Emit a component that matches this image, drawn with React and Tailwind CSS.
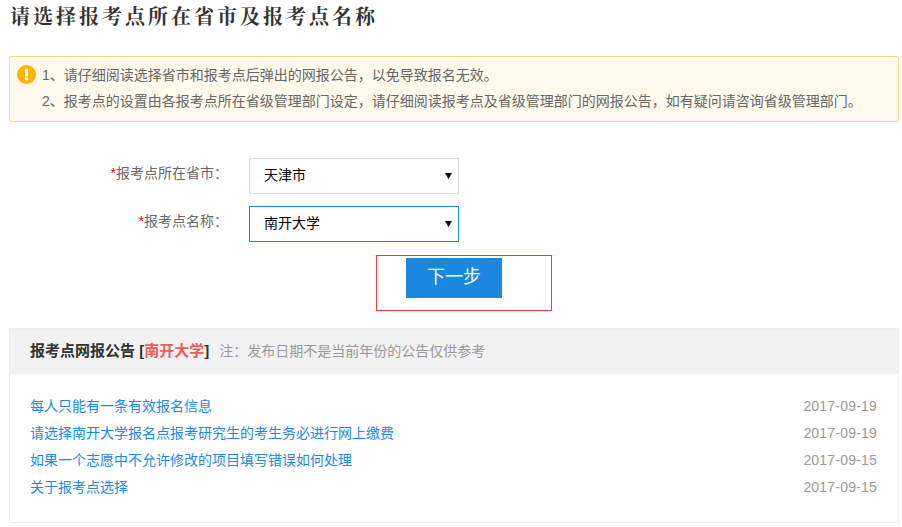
function Select({ value, borderClass }) {
  return (
    <div className="relative ml-[21px] w-[210px] h-[36px]">
      <select defaultValue={value} className={`appearance-none block w-full h-full pl-[14px] pb-[2px] border ${borderClass} bg-white text-[14px] text-black outline-none`}>
        <option>{value}</option>
      </select>
      <svg width="7" height="6" viewBox="0 0 7 6" className="absolute right-[7px] top-[15px] pointer-events-none">
        <path d="M0 0H7L3.5 6Z" fill="#111" />
      </svg>
    </div>
  );
}

export default function App() {
  const rows = [
    ["每人只能有一条有效报名信息", "2017-09-19"],
    ["请选择南开大学报名点报考研究生的考生务必进行网上缴费", "2017-09-19"],
    ["如果一个志愿中不允许修改的项目填写错误如何处理", "2017-09-15"],
    ["关于报考点选择", "2017-09-15"],
  ];
  return (
    <div className="w-[902px] h-[527px] overflow-hidden bg-white font-['Liberation_Sans','Noto_Sans_CJK_SC',sans-serif] text-[14px] text-[#666]">
      <h1 className="ml-[10px] h-[56px] pt-[2px] text-[20px] leading-[28px] font-bold tracking-[3px] text-[#333] font-['Noto_Serif_CJK_SC','Noto_Sans_CJK_SC',serif]">请选择报考点所在省市及报考点名称</h1>
      <div className="ml-[9px] w-[890px] h-[66px] border border-[#fdd87e] rounded-[2px] bg-[#fff9eb] flex pl-[7px] pt-[5px]">
        <svg width="19" height="19" viewBox="0 0 19 19" className="mt-[3px] shrink-0">
          <circle cx="9.5" cy="9.5" r="9.5" fill="#ffb400" />
          <rect x="8" y="3.5" width="3" height="8" rx="1.2" fill="#fff" />
          <circle cx="9.5" cy="14" r="1.7" fill="#fff" />
        </svg>
        <div className="ml-[6px] leading-[26px]">
          <p>1、请仔细阅读选择省市和报考点后弹出的网报公告，以免导致报名无效。</p>
          <p>2、报考点的设置由各报考点所在省级管理部门设定，请仔细阅读报考点及省级管理部门的网报公告，如有疑问请咨询省级管理部门。</p>
        </div>
      </div>
      <div className="mt-[36px] flex items-start">
        <label className="w-[228px] text-right leading-[30px]"><span className="text-[#f00]">*</span>报考点所在省市：</label>
        <Select value="天津市" borderClass="border-[#d9d9d9]" />
      </div>
      <div className="mt-[12px] flex items-start">
        <label className="w-[228px] text-right leading-[30px]"><span className="text-[#f00]">*</span>报考点名称：</label>
        <Select value="南开大学" borderClass="border-[#1c88e2]" />
      </div>
      <div className="ml-[376px] mt-[13px] w-[176px] h-[56px] border border-[#f43a3f] pl-[29px] pt-[2px]">
        <button className="block w-[96px] h-[40px] pb-[2px] bg-[#1a88e0] text-white text-[18px]">下一步</button>
      </div>
      <section className="ml-[9px] mt-[17px] w-[890px] h-[195px] border border-[#eeeeee]">
        <div className="h-[45px] bg-[#f2f2f2] pl-[20px] flex items-center pb-[1px]">
          <strong className="text-[#333] text-[15px]">报考点网报公告 [<span className="text-[#f05a5a]">南开大学</span>]</strong>
          <span className="ml-[10px] text-[#999]">注：发布日期不是当前年份的公告仅供参考</span>
        </div>
        <ul className="pt-[19px] pl-[20px] pr-[21px]">
          {rows.map(([t, d]) => (
            <li key={t} className="flex justify-between h-[27px] leading-[27px]">
              <a className="text-[#1a8ae5]">{t}</a>
              <span className="text-[#999] tracking-[0.2px]">{d}</span>
            </li>
          ))}
        </ul>
      </section>
    </div>
  );
}
